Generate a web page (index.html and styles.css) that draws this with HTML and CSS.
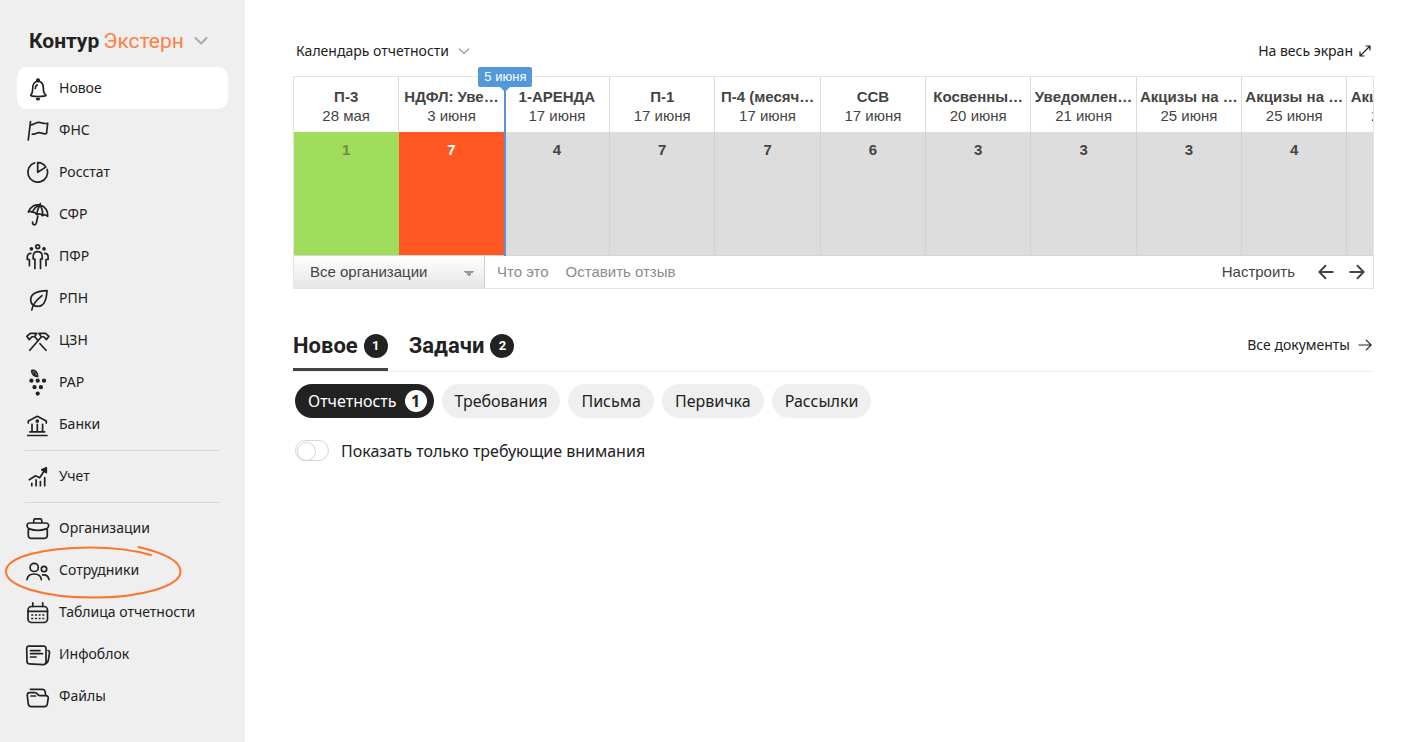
FILE: index.html
```html
<!DOCTYPE html>
<html lang="ru">
<head>
<meta charset="utf-8">
<meta name="viewport" content="width=device-width, initial-scale=1">
<title>Контур Экстерн</title>
<link rel="stylesheet" href="styles.css">
</head>
<body>
<div class="app">
  <aside class="sidebar">
    <button class="brand" type="button">
      <span class="brand-name">Контур</span>
      <span class="brand-product">Экстерн</span>
      <svg class="brand-arrow" width="14" height="10" viewBox="0 0 14 10"><path d="M1.500 2l5.500 5.500L12.500 2"/></svg>
    </button>
    <nav class="menu">
      <a class="item item-active" href="#"><svg class="icon" viewBox="0 0 24 26"><path d="M4.700 20.200c2-2 2-4 2-7.200 0-4 2-6.700 5.300-6.700s5.300 2.700 5.300 6.700c0 3.200 0 5.200 2.700 7.200.3.700-3 1.400-8 1.400s-7.600-.7-7.300-1.400z"/><path d="M9.300 13.500c0-1.800.5-2.900 1.900-3.700"/><circle class="fill" cx="12" cy="5.300" r="1.200"/><path class="fill" d="M10.700 23.800h2.600c-.3.600-.7.800-1.300.8s-1-.2-1.300-.8z"/></svg>Новое</a>
      <a class="item" href="#"><svg class="icon" viewBox="0 0 24 26"><path d="M4.500 4.500L2.300 23M4.500 8c3.200 0 4.500-2.400 8-2.600 3.400-.2 5 2 9.200.8L20.500 16.500c-3 1.200-4.500-.9-7.500-.9-2.600 0-4 1.900-6.700 1.600"/></svg>ФНС</a>
      <a class="item" href="#"><svg class="icon" viewBox="0 0 24 26"><path d="M8.700 3.800a9.900 9.900 0 1 0 12.500 6.500M11.700 3.600c3.400-.2 6.200 1.500 8.100 4.500l-8.100 5.200z"/></svg>Росстат</a>
      <a class="item" href="#"><svg class="icon" viewBox="0 0 24 26"><path d="M14.300 2.500l-.4 1.500M2.300 11C4.200 6 8.800 3.100 13.900 4.200c5.400 1.200 8.500 6 7.800 11.300-1.300-1.500-3.200-2-5.200-.8-1.300-1.700-3.400-2.200-5.800-1.200-1-1.800-2.600-2.600-4.300-2.300-1.800-1.100-3.200-1-4.100-.2zM13.900 4.200c-4 1.200-6.500 4-7.500 7M13.900 4.200c-1.800 2.600-2.800 6-3.200 9.300M13.900 4.200c2.500 3.200 3 6.500 2.600 10.500M11.800 15.200L10.300 22c-.8 3-4.200 2-3.700-.8"/></svg>СФР</a>
      <a class="item" href="#"><svg class="icon" viewBox="0 0 24 26"><circle cx="11.700" cy="3.800" r="1.900"/><circle class="fill" cx="5.400" cy="5.800" r="1"/><circle class="fill" cx="18" cy="5.800" r="1"/><path d="M8.900 25.500V16H7.200v-2.500c0-3 1.800-4.800 4.500-4.800s4.500 1.800 4.500 4.800V16h-1.700v9.500M4.800 10.400C2.400 10.400 1.300 12 1.300 14v2.500h2.100v6.200M18.600 10.400c2.400 0 3.500 1.600 3.500 3.600v2.500H20v6.200"/></svg>ПФР</a>
      <a class="item" href="#"><svg class="icon" viewBox="0 0 24 26"><path d="M21 5.700C20.500 15 18.500 21.300 12 21.300c-5 0-7.300-2.800-7.300-6.500C4.700 9 11 6 21 5.700zM5.800 25c.7-5 4.300-9.700 10.200-14.300"/></svg>РПН</a>
      <a class="item" href="#"><svg class="icon" viewBox="0 0 24 26"><path d="M.8 9.300l3.400-3h6.600L8.600 9.500 5.600 10l-2.400 2.600zM22.900 9.300l-3.400-3h-6.600l2.200 3.200 3 .5 2.400 2.600zM8.600 9.500l2.800 3.300M14 16.700l6 6.600M15.500 9.700L3.800 23.300"/></svg>ЦЗН</a>
      <a class="item" href="#"><svg class="icon" viewBox="0 0 24 26"><path d="M5.700 1.500c3.200-.4 6 1.300 6 5.800-3.700.2-6-1.800-6-5.800zM7.900 3.700l1.400 1.400"/><g class="fill"><circle cx="5.400" cy="11.700" r="1.300"/><circle cx="11.700" cy="11.700" r="1.300"/><circle cx="18" cy="11.700" r="1.300"/><circle cx="8.500" cy="18.200" r="1.300"/><circle cx="14.900" cy="18.200" r="1.300"/><circle cx="11.700" cy="24.600" r="1.300"/></g></svg>РАР</a>
      <a class="item" href="#"><svg class="icon" viewBox="0 0 24 26"><path d="M2.300 12v-2l9-4.700 9 4.700v2M6 13.300v7.400M11.300 13.300v7.400M16.600 13.300v7.400M4 20.900h14.600M1.700 24.500H21"/><circle class="fill" cx="11.300" cy="10" r="1"/></svg>Банки</a>
      <hr class="divider">
      <a class="item" href="#"><svg class="icon" viewBox="0 0 24 26"><path d="M3.300 16.700l6.200-3.900 4.200 2L19.500 6M5.800 20.300v2.400M10.100 16.900v5.800M14.400 18.600v4.100M18.700 14.500v8.200"/><path class="fill" d="M15.800 6.700l4.500-2v4.900z"/></svg>Учет</a>
      <hr class="divider">
      <a class="item" href="#"><svg class="icon" viewBox="0 0 24 26"><path d="M7.500 8l.4-3.200c.1-.6.500-.9 1-.9h5.700c.5 0 .9.300 1 .9L16 8M4 8h15.500c2.200 0 3.300 1 3.100 3-.2 1.700-.9 2.400-2.400 2.900-5.700 2-11.100 2-16.800 0-1.500-.5-2.200-1.200-2.300-2.900C.9 9 2 8 4 8zM2.300 14v5.900c0 2.300 1.200 3.500 3.500 3.500h12c2.300 0 3.500-1.200 3.500-3.500V14"/></svg>Организации</a>
      <a class="item item-marked" href="#"><svg class="icon" viewBox="0 0 24 26"><circle cx="8.200" cy="10.400" r="4.100"/><circle cx="18" cy="12" r="2.700"/><path d="M1 22.600c.5-3.500 3.200-5.600 7.200-5.600s6.700 2.100 7.200 5.600M16.600 17.900c3.600-.3 5.800 1.400 6.400 4.700"/></svg>Сотрудники
        <svg class="mark" width="178" height="54" viewBox="0 0 178 54"><path d="M134.500 2C160 8 176.500 16 176.500 26.500 176.500 41 138 52.500 89 52.500S2 41 2 26.500C2 12 40 2.500 86 2.500c25 0 47 3.500 61 7.500"/></svg></a>
      <a class="item" href="#"><svg class="icon" viewBox="0 0 24 26"><rect x="2" y="7.500" width="19.500" height="16" rx="3.500"/><path d="M2 12.300h19.500M6.800 3.800v3.700M16.700 3.800v3.700"/><path class="dots" d="M5.200 16h13.200M5.200 19.500h13.200"/></svg>Таблица отчетности</a>
      <a class="item" href="#"><svg class="icon" viewBox="0 0 24 26"><path d="M20 21V7.500c0-1.600-.7-2.300-2.300-2.300H2.800C1.300 5.200.7 6 .7 7.500L1 20.500c0 1.500.7 2.200 2.200 2.300l14.300.8c1.700 0 2.500-1 2.500-2.600M22 9.500c1.300.3 1.700.9 1.500 2.200l-1 6.500c-.4 2.800-1.600 4.800-4.500 5.300M4.500 9.600H14M4.500 12.700h12M4.500 16h5.500"/></svg>Инфоблок</a>
      <a class="item" href="#"><svg class="icon" viewBox="0 0 24 26"><path d="M4.500 6.300h12.300c1.300 0 2 .5 2.200 1.800l.7 4M1.300 12.300c-.1-1.700.6-2.600 2.300-2.600h4.900c3.300 0 3 3 5.500 3h5.900c1.600 0 2.500.9 2.300 2.500l-.9 6c-.3 1.700-1.200 2.400-2.800 2.400H5.200c-1.700 0-2.700-.8-2.900-2.400zM5 13h4.500"/></svg>Файлы</a>
    </nav>
  </aside>

  <main class="content">
    <section class="calendar">
      <header class="bar">
        <button class="link" type="button">Календарь отчетности <svg class="thin pale" width="12" height="8" viewBox="0 0 12 8"><path d="M1 1.500l5 5 5-5"/></svg></button>
        <button class="link link-tight" type="button">На весь экран <svg class="thin" width="12" height="12" viewBox="0 0 12 12"><path d="M1.500 10.500l9-9M6.500 1h4.500v4.500M1 6.500V11h4.500"/></svg></button>
      </header>
      <div class="board">
        <div class="scroller">
          <table class="reports">
            <thead>
              <tr>
                <th>П-3<span>28 мая</span></th>
                <th>НДФЛ: Уве…<span>3 июня</span></th>
                <th>1-АРЕНДА<span>17 июня</span></th>
                <th>П-1<span>17 июня</span></th>
                <th>П-4 (месяч…<span>17 июня</span></th>
                <th>ССВ<span>17 июня</span></th>
                <th>Косвенны…<span>20 июня</span></th>
                <th>Уведомлен…<span>21 июня</span></th>
                <th>Акцизы на …<span>25 июня</span></th>
                <th>Акцизы на …<span>25 июня</span></th>
                <th>Акцизы на …<span>25 июня</span></th>
              </tr>
            </thead>
            <tbody>
              <tr>
                <td class="done">1</td><td class="late">7</td><td>4</td><td>7</td><td>7</td><td>6</td><td>3</td><td>3</td><td>3</td><td>4</td><td></td>
              </tr>
            </tbody>
          </table>
        </div>
        <div class="now"><span class="now-label">5 июня</span></div>
        <footer class="tools">
          <select class="orgs" aria-label="Организации"><option>Все организации</option></select>
          <a class="muted" href="#">Что это</a>
          <a class="muted" href="#">Оставить отзыв</a>
          <button class="setup" type="button">Настроить</button>
          <button class="arrow" type="button" aria-label="Назад"><svg width="16" height="16" viewBox="0 0 16 16"><path d="M15.500 8H1.500M8 1.300L1.300 8 8 14.700"/></svg></button>
          <button class="arrow" type="button" aria-label="Вперёд"><svg width="16" height="16" viewBox="0 0 16 16"><path d="M.5 8h14M8 1.300L14.700 8 8 14.700"/></svg></button>
        </footer>
      </div>
    </section>

    <section class="inbox">
      <header class="tabs">
        <button class="tab tab-active" type="button">Новое <span class="count">1</span></button>
        <button class="tab" type="button">Задачи <span class="count">2</span></button>
        <a class="all-docs" href="#">Все документы <svg class="thin" width="14" height="12" viewBox="0 0 14 12"><path d="M.5 6h12.500M8 .8L13.200 6 8 11.200"/></svg></a>
      </header>
      <div class="chips">
        <button class="chip chip-active" type="button">Отчетность <span class="chip-count">1</span></button>
        <button class="chip" type="button">Требования</button>
        <button class="chip" type="button">Письма</button>
        <button class="chip" type="button">Первичка</button>
        <button class="chip" type="button">Рассылки</button>
      </div>
      <label class="toggle"><input type="checkbox" class="switch">Показать только требующие внимания</label>
    </section>
  </main>
</div>
</body>
</html>
```

FILE: styles.css
```css
* { box-sizing: border-box; }

body {
  margin: 0;
  background: #fff;
  color: #222;
  font: 14px/20px "Noto Sans", Roboto, sans-serif;
}

button {
  margin: 0;
  padding: 0;
  border: 0;
  background: none;
  color: inherit;
  font: inherit;
  cursor: pointer;
}

a { color: inherit; text-decoration: none; }

svg {
  flex: none;
  fill: none;
  stroke: currentColor;
  stroke-linecap: round;
  stroke-linejoin: round;
}

.app { display: flex; min-height: 100vh; }

/* Sidebar */
.sidebar {
  flex: none;
  width: 245px;
  padding: 27px 17px 24px;
  background: #efefef;
}

.brand {
  display: flex;
  align-items: center;
  height: 28px;
  margin: 0 0 12px 12px;
  font-family: Roboto, "Noto Sans", sans-serif;
  font-size: 21px;
  line-height: 28px;
}
.brand-name { font-weight: 700; }
.brand-product { margin-left: 4px; color: #ff7f45; }
.brand-arrow { margin-left: 10px; stroke: #aaa; stroke-width: 2; }

.menu { display: flex; flex-direction: column; }

.item {
  display: flex;
  align-items: center;
  gap: 9px;
  height: 42px;
  padding-left: 9px;
  border-radius: 10px;
}
.item-active { background: #fff; }
.item-marked { position: relative; }

.icon { width: 24px; height: 26px; overflow: visible; stroke-width: 1.7; }
.fill { fill: currentColor; }
.dots { stroke-linecap: butt; stroke-dasharray: 2 1.7; }

.mark {
  position: absolute;
  left: -13px;
  top: -4px;
  stroke: #fb752c;
  stroke-width: 2;
}

.divider {
  width: 194px;
  height: 1px;
  margin: 5px 0 4px 8px;
  border: 0;
  background: #d6d6d6;
}

/* Main column */
.content { flex: 1; min-width: 0; padding: 41px 44px 40px 48px; }

.bar { display: flex; justify-content: space-between; padding: 0 3px; }
.link { display: flex; align-items: center; gap: 9px; }
.link-tight { gap: 6px; }
.thin { stroke-width: 1.2; stroke-linecap: butt; stroke-linejoin: miter; }
.pale { stroke: #999; }

/* Calendar */
.board {
  position: relative;
  margin-top: 15px;
  border: 1px solid #e4e4e4;
  color: #444;
  font-family: "Liberation Sans", Arial, sans-serif;
  font-size: 15px;
}
.scroller { overflow: hidden; border-bottom: 1px solid #d4d4d4; }

.reports {
  width: 107.4%;
  table-layout: fixed;
  border-collapse: separate;
  border-spacing: 0;
}
.reports th {
  height: 55px;
  padding: 9px 0 7px;
  border-right: 1px solid #dcdcdc;
  font-weight: 700;
  line-height: 19px;
  text-align: center;
  white-space: nowrap;
}
.reports th span { display: block; font-weight: 400; }
.reports td {
  height: 123px;
  padding: 8px 0;
  border-right: 1px solid #d2d2d2;
  background: #ddd;
  font-weight: 700;
  text-align: center;
  vertical-align: top;
}
.reports .done { border-color: #a0dd5c; background: #a0dd5c; color: #6b8c46; }
.reports .late { border-color: #ff5722; background: #ff5722; color: #fff; }

.now {
  position: absolute;
  top: 0;
  bottom: 32px;
  left: 19.5%;
  width: 2px;
  background: #5b94d6;
}
.now::before {
  content: "";
  position: absolute;
  top: 10px;
  left: -4px;
  border: 5px solid transparent;
  border-top-color: #5199db;
}
.now-label {
  position: absolute;
  top: -10px;
  left: -26px;
  width: 54px;
  border-radius: 2px;
  background: #5199db;
  color: #fff;
  font-size: 13px;
  text-align: center;
}

.tools { display: flex; align-items: center; height: 32px; }
.orgs {
  align-self: stretch;
  width: 191px;
  margin-right: 12px;
  padding: 0 16px;
  border: 0;
  border-right: 1px solid #ccc;
  border-radius: 0;
  appearance: none;
  background:
    linear-gradient(to bottom right, #999 50%, transparent 50%) right 10px top 15px / 5px 5px no-repeat,
    linear-gradient(to bottom left, #999 50%, transparent 50%) right 15px top 15px / 5px 5px no-repeat,
    linear-gradient(#fff, #e6e6e6);
  color: #444;
  font: inherit;
}
.muted { margin-right: 17px; color: #8c8c8c; }
.setup { margin-left: auto; margin-right: 8px; }
.arrow { display: flex; margin-left: 15px; }
.arrow:last-child { margin-right: 8px; }
.arrow svg { stroke-width: 2; stroke-linecap: butt; stroke-linejoin: miter; }

/* Inbox */
.inbox { margin-top: 36px; }
.tabs {
  display: flex;
  align-items: center;
  height: 47px;
  border-bottom: 1px solid #eee;
}
.tab {
  display: flex;
  gap: 6px;
  height: 46px;
  margin-right: 21px;
  padding-top: 9px;
  border-bottom: 3px solid transparent;
  font-family: Roboto, "Noto Sans", sans-serif;
  font-size: 22px;
  font-weight: 700;
  line-height: 24px;
}
.tab-active { border-color: #444; }
.count {
  width: 24px;
  height: 24px;
  border-radius: 12px;
  background: #222;
  color: #fff;
  font-size: 13px;
}
.all-docs { display: flex; align-items: center; gap: 8px; margin: 0 2px 6px auto; }

.chips { display: flex; gap: 8px; padding: 12px 2px 0; }
.chip {
  display: flex;
  align-items: center;
  gap: 8px;
  height: 34px;
  padding: 0 13px;
  border-radius: 17px;
  background: #efefef;
  font-size: 16px;
}
.chip-active { padding-right: 7px; background: #222; color: #fff; }
.chip-count {
  width: 22px;
  border-radius: 11px;
  background: #fff;
  color: #222;
  font-weight: 700;
  line-height: 22px;
}

.toggle {
  display: flex;
  align-items: center;
  gap: 12px;
  width: max-content;
  margin: 22px 0 0 2px;
  font-size: 16px;
}
.switch {
  width: 34px;
  height: 21px;
  margin: 0;
  padding: 1px;
  border: 1px solid #d4d4d4;
  border-radius: 11px;
  appearance: none;
  background: #fff;
}
.switch::before {
  content: "";
  display: block;
  width: 17px;
  height: 17px;
  border: 1px solid #d4d4d4;
  border-radius: 50%;
}
.switch:checked { background: #a0dd5c; }
.switch:checked::before { margin-left: 13px; background: #fff; }
```
